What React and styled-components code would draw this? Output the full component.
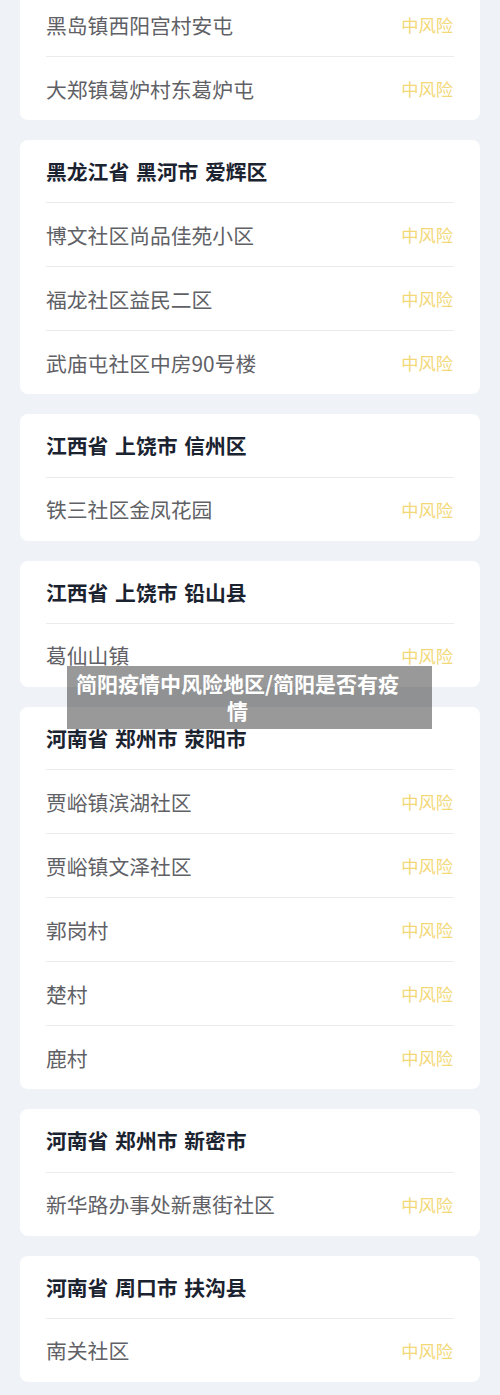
import React from "react";
import styled, { createGlobalStyle } from "styled-components";

const GlobalStyle = createGlobalStyle`
  html, body {
    margin: 0;
    padding: 0;
    background: #eff2f6;
  }
  body {
    font-family: "Noto Sans CJK SC", "Noto Sans", sans-serif;
  }
`;

const Page = styled.div`
  position: relative;
  width: 500px;
  display: flex;
  flex-direction: column;
  gap: 20px;
  padding: 0 20px 20px;
  box-sizing: border-box;
  overflow: hidden;
`;

const Card = styled.section`
  background: #ffffff;
  border-radius: 8px;
  padding: 0 26px;
  display: flex;
  flex-direction: column;
  margin-top: ${(p) => (p.$cut ? "-7px" : "0")};
`;

const Header = styled.h2`
  margin: 0;
  height: 62.33px;
  display: flex;
  align-items: center;
  font-size: 20.8px;
  font-weight: 700;
  color: #1b2330;
  word-spacing: 2px;
`;

const Row = styled.div`
  height: 63px;
  display: flex;
  align-items: center;
  justify-content: space-between;
  border-top: ${(p) => (p.$first ? "none" : "1px solid #ececec")};
`;

const Place = styled.span`
  font-size: 20.8px;
  color: #5f6166;
`;

const Risk = styled.span`
  font-size: 17.3px;
  color: #f3d878;
  margin-right: 1px;
`;

const Banner = styled.div`
  position: absolute;
  left: 67px;
  top: 666px;
  width: 365px;
  height: 63px;
  box-sizing: border-box;
  padding: 4px 32px 0 8px;
  background: rgba(0, 0, 0, 0.4);
  color: #ffffff;
  font-size: 21px;
  font-weight: 700;
  line-height: 27px;
  text-align: center;
`;

const groups = [
  { title: null, items: ["黑岛镇西阳宫村安屯", "大郑镇葛炉村东葛炉屯"] },
  {
    title: "黑龙江省 黑河市 爱辉区",
    items: ["博文社区尚品佳苑小区", "福龙社区益民二区", "武庙屯社区中房90号楼"],
  },
  { title: "江西省 上饶市 信州区", items: ["铁三社区金凤花园"] },
  { title: "江西省 上饶市 铅山县", items: ["葛仙山镇"] },
  {
    title: "河南省 郑州市 荥阳市",
    items: ["贾峪镇滨湖社区", "贾峪镇文泽社区", "郭岗村", "楚村", "鹿村"],
  },
  { title: "河南省 郑州市 新密市", items: ["新华路办事处新惠街社区"] },
  { title: "河南省 周口市 扶沟县", items: ["南关社区"] },
];

export default function App() {
  return (
    <>
      <GlobalStyle />
      <Page>
        {groups.map((g, i) => (
          <Card key={i} $cut={!g.title}>
            {g.title && <Header>{g.title}</Header>}
            {g.items.map((it, j) => (
              <Row key={j} $first={!g.title && j === 0}>
                <Place>{it}</Place>
                <Risk>中风险</Risk>
              </Row>
            ))}
          </Card>
        ))}
        <Banner>简阳疫情中风险地区/简阳是否有疫情</Banner>
      </Page>
    </>
  );
}
